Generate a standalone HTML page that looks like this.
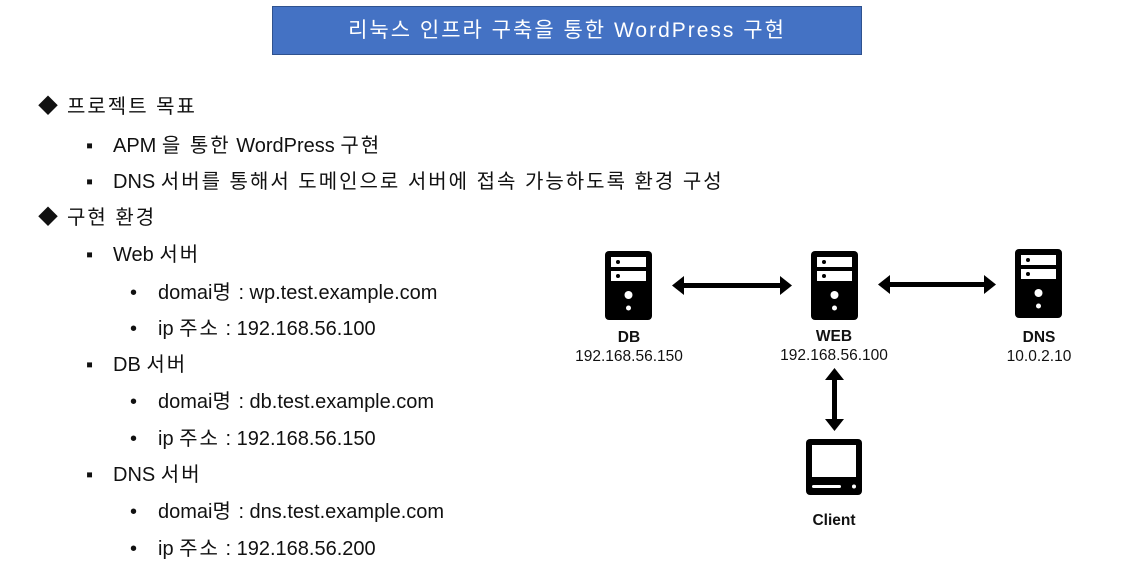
<!DOCTYPE html>
<html><head><meta charset="utf-8"><style>
body{margin:0;width:1134px;height:567px;background:#fff;position:relative;overflow:hidden;font-family:"Liberation Sans","Noto Sans CJK KR",sans-serif;color:#111}
.t{position:absolute;left:272px;top:6px;width:588px;height:47px;background:#4472C4;border:1px solid #2f528f;color:#fff;font-size:21px;letter-spacing:2px;line-height:47px;text-align:center}
.l{position:absolute;font-size:20px;white-space:nowrap;line-height:24px}
.k{letter-spacing:2px}
.m{position:absolute;font-size:20px;line-height:24px}
.c{position:absolute;font-size:15.5px;text-align:center;width:160px;line-height:19px}
.b{font-weight:bold}
</style></head><body>
<div class="t">리눅스 인프라 구축을 통한 WordPress 구현</div>
<div class="m" style="left:38px;top:95px">◆</div><div class="l" style="left:67px;top:95px"><span class="k">프로젝트 목표</span></div>
<div class="m" style="left:86px;top:134px">▪</div><div class="l" style="left:113px;top:134px">APM <span class="k">을 통한</span> WordPress <span class="k">구현</span></div>
<div class="m" style="left:86px;top:170px">▪</div><div class="l" style="left:113px;top:170px">DNS <span class="k">서버를 통해서 도메인으로 서버에 접속 가능하도록 환경 구성</span></div>
<div class="m" style="left:38px;top:206px">◆</div><div class="l" style="left:67px;top:206px"><span class="k">구현 환경</span></div>
<div class="m" style="left:86px;top:243px">▪</div><div class="l" style="left:113px;top:243px">Web <span class="k">서버</span></div>
<div class="m" style="left:130px;top:281px">•</div><div class="l" style="left:158px;top:281px">domai<span class="k">명</span> : wp.test.example.com</div>
<div class="m" style="left:130px;top:317px">•</div><div class="l" style="left:158px;top:317px">ip <span class="k">주소</span> : 192.168.56.100</div>
<div class="m" style="left:86px;top:353px">▪</div><div class="l" style="left:113px;top:353px">DB <span class="k">서버</span></div>
<div class="m" style="left:130px;top:390px">•</div><div class="l" style="left:158px;top:390px">domai<span class="k">명</span> : db.test.example.com</div>
<div class="m" style="left:130px;top:427px">•</div><div class="l" style="left:158px;top:427px">ip <span class="k">주소</span> : 192.168.56.150</div>
<div class="m" style="left:86px;top:463px">▪</div><div class="l" style="left:113px;top:463px">DNS <span class="k">서버</span></div>
<div class="m" style="left:130px;top:500px">•</div><div class="l" style="left:158px;top:500px">domai<span class="k">명</span> : dns.test.example.com</div>
<div class="m" style="left:130px;top:537px">•</div><div class="l" style="left:158px;top:537px">ip <span class="k">주소</span> : 192.168.56.200</div>
<svg width="1134" height="567" style="position:absolute;left:0;top:0">
<defs><g id="srv"><rect x="0" y="0" width="47" height="69" rx="4" fill="#000"/><rect x="6" y="6" width="35" height="10" fill="#fff"/><rect x="6" y="20" width="35" height="10" fill="#fff"/><circle cx="13" cy="11" r="2" fill="#000"/><circle cx="13" cy="25" r="2" fill="#000"/><circle cx="23.5" cy="44" r="4" fill="#fff"/><circle cx="23.5" cy="57" r="2.5" fill="#fff"/></g></defs>
<use href="#srv" x="605" y="251"/><use href="#srv" x="811" y="251"/><use href="#srv" x="1015" y="249"/>
<g fill="#000"><rect x="680" y="283" width="105" height="5"/><polygon points="672,285.5 684,276 684,295"/><polygon points="792,285.5 780,276 780,295"/>
<rect x="886" y="282" width="102" height="5"/><polygon points="878,284.5 890,275 890,294"/><polygon points="996,284.5 984,275 984,294"/>
<rect x="832" y="376" width="5" height="46"/><polygon points="834.5,368 825,380 844,380"/><polygon points="834.5,431 825,419 844,419"/></g>
<rect x="806" y="439" width="56" height="56" rx="4" fill="#000"/><rect x="812" y="445" width="44" height="32" fill="#fff"/><rect x="812" y="485" width="29" height="3" rx="1.5" fill="#fff"/><circle cx="854" cy="486.5" r="2" fill="#fff"/>
</svg>
<div class="c b" style="left:549px;top:328px">DB</div>
<div class="c" style="left:549px;top:347px">192.168.56.150</div>
<div class="c b" style="left:754px;top:327px">WEB</div>
<div class="c" style="left:754px;top:346px">192.168.56.100</div>
<div class="c b" style="left:959px;top:328px">DNS</div>
<div class="c" style="left:959px;top:347px">10.0.2.10</div>
<div class="c b" style="left:754px;top:511px">Client</div>
</body></html>
